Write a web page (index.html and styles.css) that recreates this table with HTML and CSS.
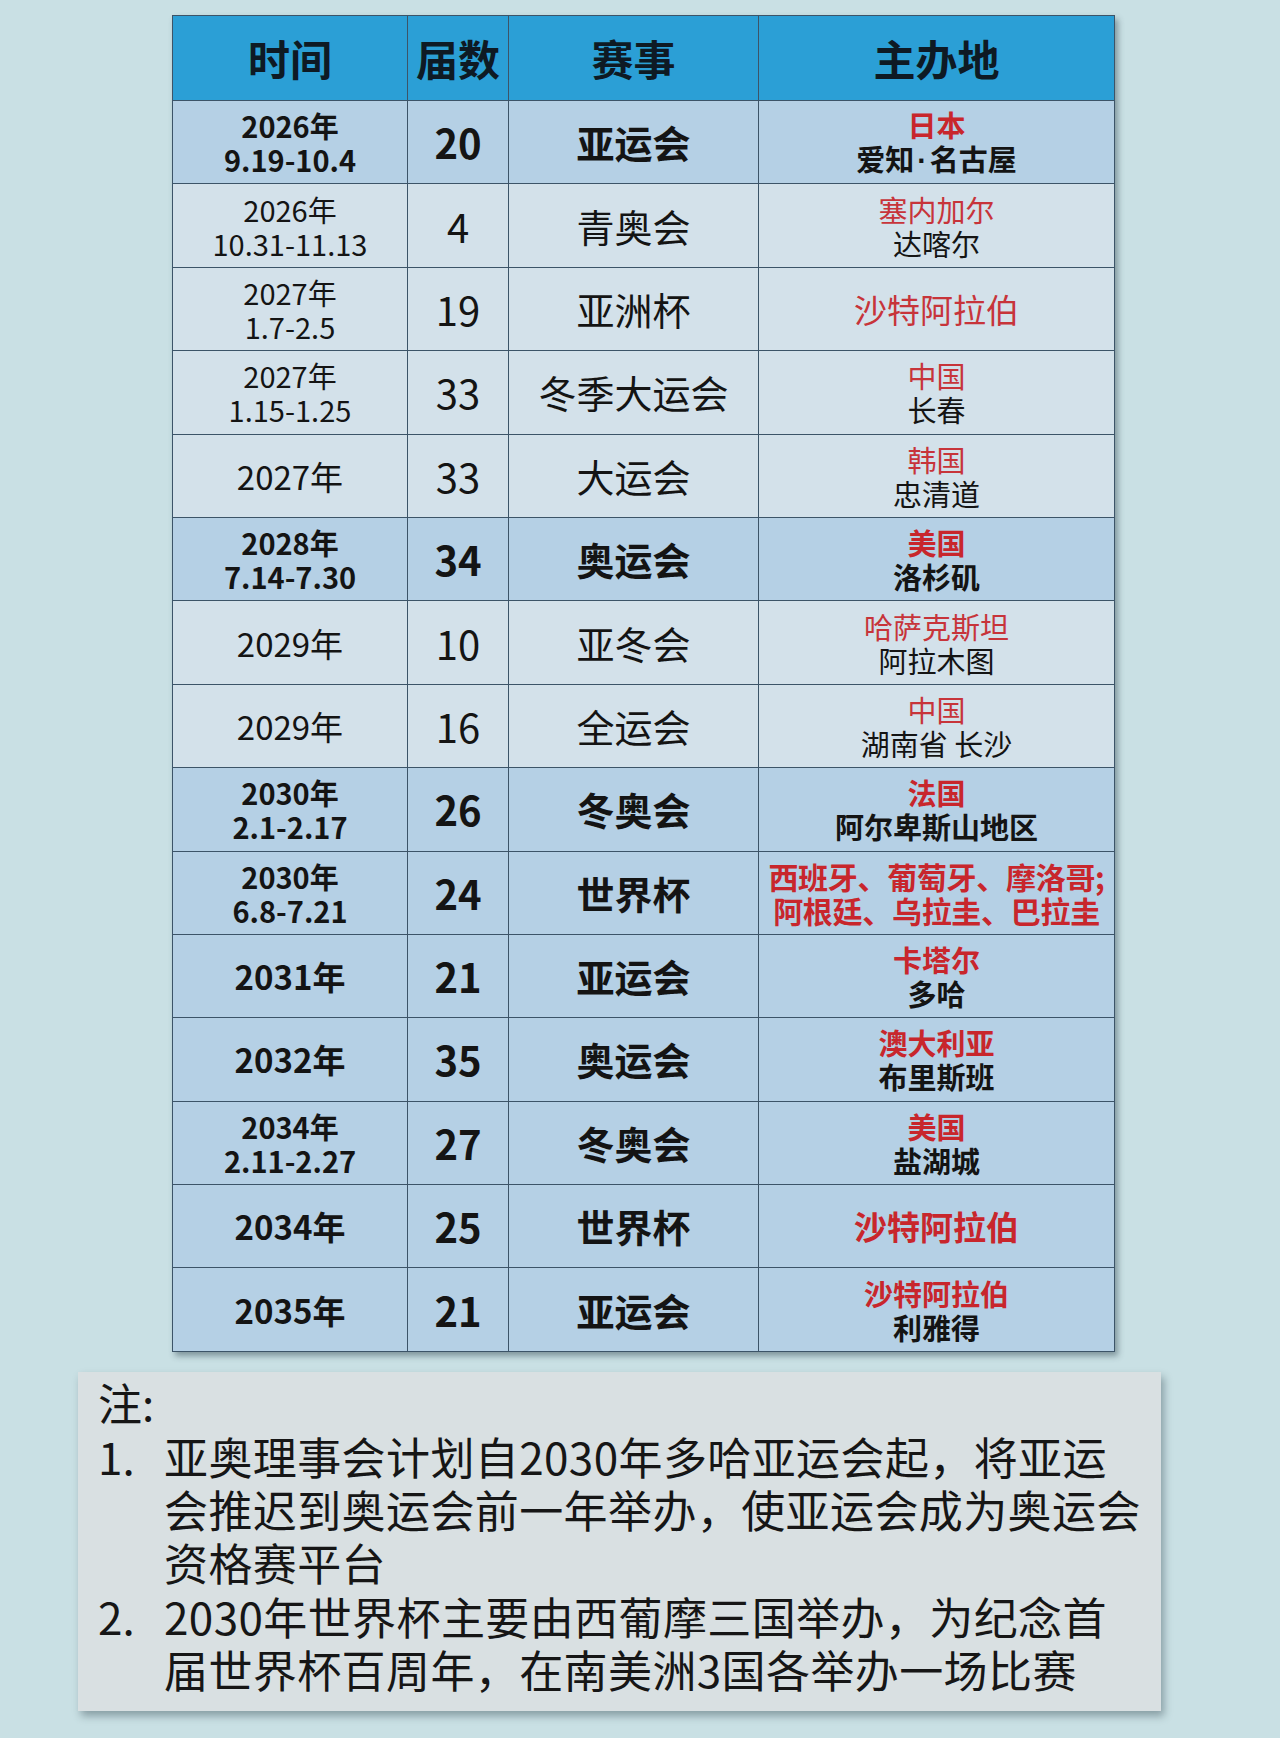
FILE: index.html
```html
<!DOCTYPE html>
<html lang="zh-CN">
<head>
<meta charset="utf-8">
<title>赛事表</title>
<link rel="stylesheet" href="styles.css">
</head>
<body>
<div class="page">
  <table class="events">
    <colgroup>
      <col class="c-time"><col class="c-num"><col class="c-event"><col class="c-host">
    </colgroup>
    <thead>
      <tr><th>时间</th><th>届数</th><th>赛事</th><th>主办地</th></tr>
    </thead>
    <tbody>
      <tr class="hi"><td class="time">2026年<br>9.19-10.4</td><td class="num">20</td><td class="ev">亚运会</td><td class="host"><span class="red">日本</span><br>爱知<span class="dot">·</span>名古屋</td></tr>
      <tr><td class="time">2026年<br>10.31-11.13</td><td class="num">4</td><td class="ev">青奥会</td><td class="host"><span class="red">塞内加尔</span><br>达喀尔</td></tr>
      <tr><td class="time">2027年<br>1.7-2.5</td><td class="num">19</td><td class="ev">亚洲杯</td><td class="host single"><span class="red">沙特阿拉伯</span></td></tr>
      <tr><td class="time">2027年<br>1.15-1.25</td><td class="num">33</td><td class="ev">冬季大运会</td><td class="host"><span class="red">中国</span><br>长春</td></tr>
      <tr><td class="time single">2027年</td><td class="num">33</td><td class="ev">大运会</td><td class="host"><span class="red">韩国</span><br>忠清道</td></tr>
      <tr class="hi"><td class="time">2028年<br>7.14-7.30</td><td class="num">34</td><td class="ev">奥运会</td><td class="host"><span class="red">美国</span><br>洛杉矶</td></tr>
      <tr><td class="time single">2029年</td><td class="num">10</td><td class="ev">亚冬会</td><td class="host"><span class="red">哈萨克斯坦</span><br>阿拉木图</td></tr>
      <tr><td class="time single">2029年</td><td class="num">16</td><td class="ev">全运会</td><td class="host"><span class="red">中国</span><br>湖南省 长沙</td></tr>
      <tr class="hi"><td class="time">2030年<br>2.1-2.17</td><td class="num">26</td><td class="ev">冬奥会</td><td class="host"><span class="red">法国</span><br>阿尔卑斯山地区</td></tr>
      <tr class="hi"><td class="time">2030年<br>6.8-7.21</td><td class="num">24</td><td class="ev">世界杯</td><td class="host wide"><span class="red">西班牙、葡萄牙、摩洛哥;<br>阿根廷、乌拉圭、巴拉圭</span></td></tr>
      <tr class="hi"><td class="time single">2031年</td><td class="num">21</td><td class="ev">亚运会</td><td class="host"><span class="red">卡塔尔</span><br>多哈</td></tr>
      <tr class="hi"><td class="time single">2032年</td><td class="num">35</td><td class="ev">奥运会</td><td class="host"><span class="red">澳大利亚</span><br>布里斯班</td></tr>
      <tr class="hi"><td class="time">2034年<br>2.11-2.27</td><td class="num">27</td><td class="ev">冬奥会</td><td class="host"><span class="red">美国</span><br>盐湖城</td></tr>
      <tr class="hi"><td class="time single">2034年</td><td class="num">25</td><td class="ev">世界杯</td><td class="host single"><span class="red">沙特阿拉伯</span></td></tr>
      <tr class="hi"><td class="time single">2035年</td><td class="num">21</td><td class="ev">亚运会</td><td class="host"><span class="red">沙特阿拉伯</span><br>利雅得</td></tr>
    </tbody>
  </table>

  <div class="notes">
    <div class="note-title">注:</div>
    <ol class="note-list">
      <li><span class="n">1.</span><span class="t">亚奥理事会计划自2030年多哈亚运会起，将亚运<br>会推迟到奥运会前一年举办，使亚运会成为奥运会<br>资格赛平台</span></li>
      <li><span class="n">2.</span><span class="t">2030年世界杯主要由西葡摩三国举办，为纪念首<br>届世界杯百周年，在南美洲3国各举办一场比赛</span></li>
    </ol>
  </div>
</div>
</body>
</html>
```

FILE: styles.css
```css
html, body {
  margin: 0;
  padding: 0;
}
body {
  background: #c9e0e4;
  font-family: "Noto Sans CJK SC", "Noto Sans", sans-serif;
  color: #141414;
}
.page {
  width: 1280px;
  height: 1738px;
  padding-top: 15px;
  box-sizing: border-box;
  overflow: hidden;
}
.events {
  margin-left: 172px;
  width: 942px;
  border-collapse: collapse;
  table-layout: fixed;
  box-shadow: 3px 4px 6px rgba(40, 60, 70, 0.45);
}
.c-time { width: 235px; }
.c-num { width: 101px; }
.c-event { width: 250px; }
.c-host { width: 356px; }
.events th, .events td {
  border: 1.5px solid #3c5468;
  text-align: center;
  vertical-align: middle;
  padding: 0;
}
.events th {
  background: #2b9fd6;
  height: 84px;
  font-size: 42px;
  font-weight: 700;
  color: #0e1a24;
  line-height: 1;
}
.events td {
  height: 82.4px;
  background: #d3e1ea;
  font-weight: 400;
}
.events tr.hi td {
  background: #b5d0e5;
  font-weight: 700;
}
.time {
  font-size: 29px;
  line-height: 34px;
}
.time.single {
  font-size: 33px;
}
.num {
  font-size: 40px;
  line-height: 1;
}
.ev {
  font-size: 38px;
  line-height: 1;
}
.host {
  font-size: 29px;
  line-height: 34px;
}
.host .dot {
  font-family: "Liberation Sans", sans-serif;
  margin: 0 3px;
}
.host.single {
  font-size: 33px;
}
.host.wide {
  font-size: 30px;
  letter-spacing: -0.3px;
}
.red {
  color: #c7343a;
}
tr.hi .red {
  color: #c8262c;
}
.notes {
  margin-top: 20px;
  margin-left: 78px;
  width: 1083px;
  height: 339px;
  box-sizing: border-box;
  background: #d9e0e2;
  box-shadow: 3px 5px 8px rgba(40, 60, 70, 0.4);
  padding: 4px 0 0 20px;
  font-size: 44px;
  line-height: 53px;
  color: #161616;
}
.note-list {
  list-style: none;
  margin: 0;
  padding: 0;
}
.note-list li {
  display: flex;
  margin-top: 1px;
}
.note-list .n {
  width: 66px;
  flex: none;
}
.note-list .t {
  white-space: nowrap;
  letter-spacing: 0.4px;
}
```
